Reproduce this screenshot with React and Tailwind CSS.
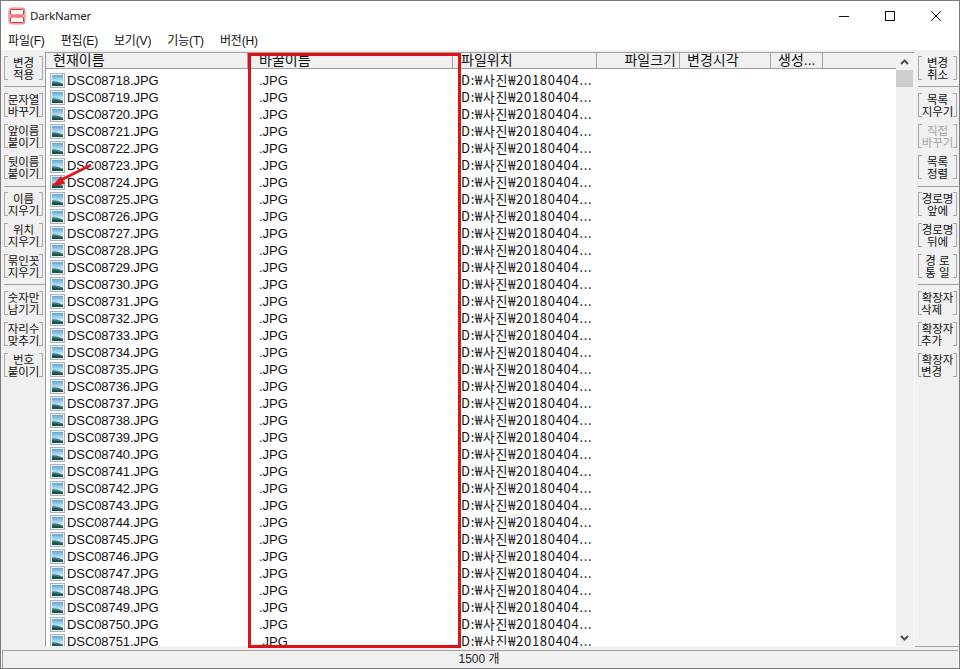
const FONT = "font-['Liberation_Sans','Noto_Sans_CJK_KR',sans-serif]";

function Btn({ lines, disabled, left }) {
  const tick = "absolute w-[3px] h-px bg-[#a8a8a8]";
  return (
    <div className={"relative w-[39px] h-6 shrink-0 border-x border-[#a8a8a8] pt-px flex flex-col justify-center text-[11.5px] leading-[12px] whitespace-pre " + (left ? "items-stretch " : "items-center ") + (disabled ? "text-[#a5a5a5]" : "text-[#111]")}>
      <span className={tick + " left-0 top-0"} />
      <span className={tick + " left-0 bottom-0"} />
      <span className={tick + " right-0 top-0"} />
      <span className={tick + " right-0 bottom-0"} />
      {lines.map((l, i) => (
        <span key={i} className={left && i === 1 ? "text-left pl-[2px]" : "text-center"}>{l}</span>
      ))}
    </div>
  );
}

function Sep({ className }) {
  return <div className={"h-px bg-[#a0a0a0] shrink-0 " + className} />;
}

function Toolbar({ groups, seps, className }) {
  return (
    <div className={"flex flex-col pt-[6px] " + className}>
      {groups.map((g, gi) => (
        <div key={gi} className="flex flex-col">
          {gi > 0 && <Sep className={seps[gi - 1]} />}
          <div className="flex flex-col gap-[7px]">
            {g.map((b, i) => <Btn key={i} {...b} />)}
          </div>
        </div>
      ))}
    </div>
  );
}

function FileIcon() {
  return (
    <svg width="15" height="15" viewBox="0 0 15 15" className="shrink-0">
      <defs>
        <linearGradient id="sky" x1="0" y1="0" x2="0" y2="1">
          <stop offset="0" stopColor="#5ea6d6" />
          <stop offset="0.55" stopColor="#bfe0f0" />
          <stop offset="1" stopColor="#ffffff" />
        </linearGradient>
      </defs>
      <rect x="0.5" y="0.5" width="14" height="14" fill="#eaf0f3" stroke="#a9b3b9" />
      <rect x="2" y="2" width="11" height="11" fill="url(#sky)" />
      <path d="M2 8.5 C5 7.5 9 9 13 10.5 V13 H2 Z" fill="#3d7f7a" />
      <path d="M2 10.5 C6 10 9 11 13 12 V13 H2 Z" fill="#1d4f4a" />
    </svg>
  );
}

const leftGroups = [
  [{ lines: ["변경", "적용"] }],
  [{ lines: ["문자열", "바꾸기"] }, { lines: ["앞이름", "붙이기"] }, { lines: ["뒷이름", "붙이기"] }],
  [{ lines: ["이름", "지우기"] }, { lines: ["위치", "지우기"] }, { lines: ["묶인꼿", "지우기"] }],
  [{ lines: ["숫자만", "남기기"] }, { lines: ["자리수", "맞추기"] }, { lines: ["번호", "붙이기"] }],
];
const rightGroups = [
  [{ lines: ["변경", "취소"] }],
  [{ lines: ["목록", "지우기"] }, { lines: ["직접", "바꾸기"], disabled: true }, { lines: ["목록", "정렬"] }],
  [{ lines: ["경로명", "앞에"] }, { lines: ["경로명", "뒤에"] }, { lines: ["경 로", "통 일"] }],
  [{ lines: ["확장자", "삭제"], left: true }, { lines: ["확장자", "추가"], left: true }, { lines: ["확장자", "변경"], left: true }],
];
const seps = ["mt-[6px] mb-[6px]", "mt-[7px] mb-[5px]", "mt-[6px] mb-[6px]"];

const rows = Array.from({ length: 34 }, (_, i) => 8718 + i);

const headers = [
  { t: "현재이름", c: "w-[202px] pl-[7px]" },
  { t: "바꿀이름", c: "w-[205px] pl-[11px]" },
  { t: "파일위치", c: "w-[144px] pl-[8px]" },
  { t: "파일크기", c: "w-[83px] justify-end pr-[3px]" },
  { t: "변경시각", c: "w-[91px] pl-[7px]" },
  { t: "생성...", c: "w-[52px] pl-[7px]" },
];

export default function App() {
  return (
    <div className={"relative w-[960px] h-[669px] border border-[#7a7a7a] bg-white flex flex-col overflow-hidden text-black " + FONT}>
      {/* title bar */}
      <div className="h-[29px] shrink-0 flex items-center pt-px">
        <svg width="18" height="18" viewBox="0 0 18 18" className="ml-[7px]">
          <rect x="1" y="1" width="16" height="16" rx="3" fill="#f3c9c9" stroke="#e08a8a" strokeWidth="1.2" />
          <rect x="2.5" y="2.5" width="13" height="5.5" rx="1" fill="#ffffff" stroke="#d9363a" />
          <rect x="2.5" y="10" width="13" height="5.5" rx="1" fill="#ffffff" stroke="#d9363a" />
        </svg>
        <span className="ml-[4px] text-[11.5px] tracking-[-0.2px] text-[#222] font-['Noto_Sans',sans-serif]">DarkNamer</span>
        <div className="ml-auto flex items-center">
          <svg width="46" height="12" viewBox="0 0 46 12" className="mr-[17px]"><path d="M18 6.5 H28" stroke="#111" strokeWidth="1" /></svg>
          <svg width="12" height="12" viewBox="0 0 12 12" className="mr-[34px]"><rect x="1.5" y="1.5" width="9" height="9" fill="none" stroke="#111" /></svg>
          <svg width="12" height="12" viewBox="0 0 12 12" className="mr-[17px]"><path d="M1 1 L11 11 M11 1 L1 11" stroke="#111" strokeWidth="1" /></svg>
        </div>
      </div>
      {/* menu */}
      <div className="h-[20px] shrink-0 flex items-center gap-[16px] pl-[7px] pt-[2px] text-[12px] tracking-[-0.15px] text-[#111]">
        <span>파일(F)</span>
        <span>편집(E)</span>
        <span>보기(V)</span>
        <span>기능(T)</span>
        <span>버전(H)</span>
      </div>
      {/* main */}
      <div className="h-[597px] shrink-0 flex bg-[#f0f0f0]">
        <Toolbar groups={leftGroups} seps={seps} className="w-[44px] pl-[3px]" />
        <div className="w-[870px] mt-[2px] flex border-t border-l border-t-[#a0a0a0] border-l-[#9a9a9a] border-r border-r-[#fafafa] border-b border-b-[#f7f7f7]">
          <div className="w-[850px] flex flex-col">
            <div className="h-[16px] shrink-0 flex bg-[#f0f0f0] border-b border-[#a0a0a0] text-[14px] leading-[15px] text-[#111]">
              {headers.map((h) => (
                <div key={h.t} className={"flex items-center border-r border-[#a0a0a0] whitespace-nowrap " + h.c}>{h.t}</div>
              ))}
            </div>
            <div className="flex-1 bg-white overflow-hidden pt-[3px] text-[13px] leading-[15px] text-[#111]">
              {rows.map((n) => (
                <div key={n} className="h-[17px] flex items-center whitespace-nowrap">
                  <div className="w-[202px] flex items-center gap-[2px] pl-[4px]">
                    <FileIcon />
                    <span className="tracking-[-0.08px]">{"DSC0" + n + ".JPG"}</span>
                  </div>
                  <div className="w-[212px] pl-[11px]">.JPG</div>
                  <div className="pl-px pb-[2px] tracking-[0.7px] font-['Noto_Sans_CJK_KR',sans-serif]">D:₩사진₩20180404...</div>
                </div>
              ))}
            </div>
          </div>
          <div className="w-[17px] flex flex-col items-stretch bg-[#f0f0f0]">
            <div className="h-[17px] flex items-center justify-center">
              <svg width="9" height="6" viewBox="0 0 9 6"><path d="M1 5 L4.5 1.5 L8 5" fill="none" stroke="#505050" strokeWidth="2" /></svg>
            </div>
            <div className="h-[17px] bg-[#cdcdcd]" />
            <div className="flex-1" />
            <div className="h-[17px] flex items-center justify-center">
              <svg width="9" height="6" viewBox="0 0 9 6"><path d="M1 1 L4.5 4.5 L8 1" fill="none" stroke="#505050" strokeWidth="2" /></svg>
            </div>
          </div>
        </div>
        <div className="w-[44px] flex flex-col border-b border-[#a0a0a0]">
          <Toolbar groups={rightGroups} seps={seps} className="pl-[3px]" />
        </div>
      </div>
      <div className="h-[3px] shrink-0 bg-[#f0f0f0]" />
      {/* status */}
      <div className="h-[18px] shrink-0 bg-[#f0f0f0] border-t border-l border-[#a0a0a0] ml-px mr-px pb-px flex items-center justify-center text-[12px] text-[#222]">
        <span className="-ml-[3px]">1500 개</span>
      </div>

      {/* annotations */}
      <div className="absolute left-[247px] top-[52px] w-[213px] h-[595px] border-[3px] border-[#e01015] pointer-events-none" />
      <svg className="absolute left-[49px] top-[162px] pointer-events-none" width="44" height="26" viewBox="0 0 44 26">
        <path d="M41 2 L9 18" stroke="#e01a22" strokeWidth="2.8" />
        <path d="M2 23 L11 13 L15 21 Z" fill="#e01a22" />
      </svg>
    </div>
  );
}
